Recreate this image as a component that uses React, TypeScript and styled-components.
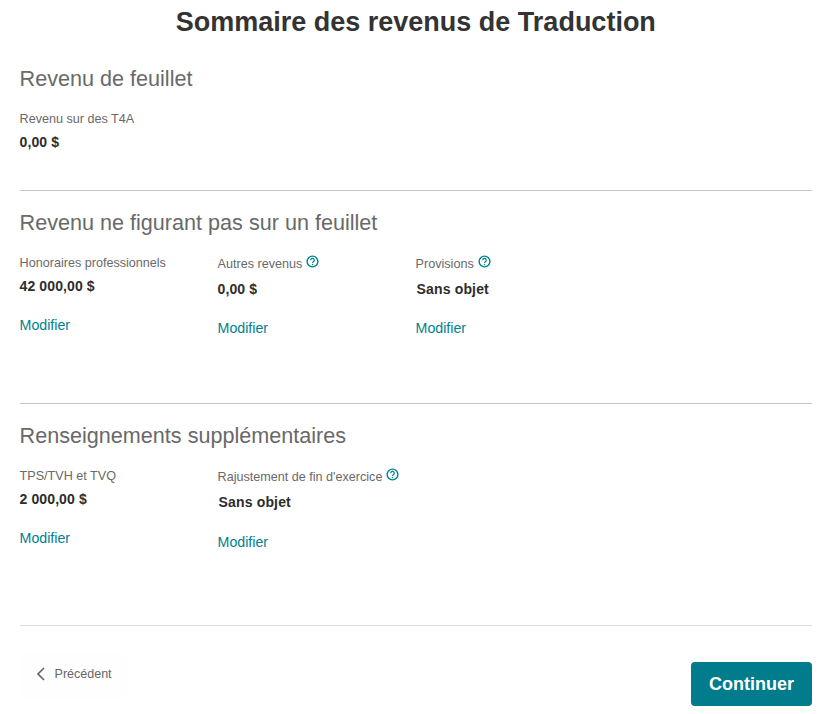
import React from 'react';
import styled, { createGlobalStyle } from 'styled-components';

const GlobalStyle = createGlobalStyle`
  html, body {
    margin: 0;
    padding: 0;
    background: #ffffff;
    font-family: "Liberation Sans", Arial, sans-serif;
  }
`;

const Page = styled.div`
  width: 825px;
  height: 714px;
  box-sizing: border-box;
  padding: 0 13px 0 19.6px;
  overflow: hidden;
`;

const Title = styled.h1`
  margin: 0;
  padding-top: 6px;
  height: 47px;
  box-sizing: border-box;
  text-align: center;
  font-size: 27px;
  line-height: 32px;
  font-weight: 700;
  color: #333333;
`;

const Section = styled.section<{ $height: number; $tone?: string }>`
  height: ${(p) => p.$height}px;
  box-sizing: border-box;
  border-bottom: 1px solid ${(p) => p.$tone ?? '#c4c6c8'};
`;

const SectionTitle = styled.h2`
  margin: 0;
  padding-top: 19px;
  font-size: 21.6px;
  line-height: 26px;
  font-weight: 400;
  color: #696969;
`;

const Fields = styled.div<{ $top: number }>`
  display: grid;
  grid-template-columns: repeat(3, 198px);
  padding-top: ${(p) => p.$top}px;
`;

const Field = styled.div``;

const LabelRow = styled.div<{ $help?: boolean }>`
  display: flex;
  align-items: flex-start;
  gap: 4px;
  height: 18px;
  padding-top: ${(p) => (p.$help ? 1 : 0)}px;
`;

const Label = styled.span`
  font-size: 12.6px;
  line-height: 16px;
  color: #696969;
`;

const HelpIcon = styled.svg`
  width: 13px;
  height: 13px;
  margin-top: -1px;
  flex: none;
`;

const Amount = styled.div<{ $help?: boolean; $spaced?: boolean }>`
  margin-top: ${(p) => (p.$help ? 7 : 5)}px;
  padding-left: ${(p) => (p.$spaced ? 1 : 0)}px;
  font-size: 14px;
  line-height: 17px;
  font-weight: 700;
  letter-spacing: ${(p) => (p.$spaced ? 0.15 : 0.1)}px;
  color: #2d2d2d;
`;

const EditLink = styled.a<{ $gap?: number }>`
  display: block;
  margin-top: ${(p) => p.$gap ?? 22}px;
  font-size: 14.2px;
  line-height: 17px;
  color: #00818f;
  text-decoration: none;
`;

const Footer = styled.div`
  display: flex;
  justify-content: space-between;
  align-items: flex-start;
  padding-top: 28px;
`;

const BackButton = styled.button`
  display: flex;
  align-items: center;
  gap: 9px;
  width: 108px;
  height: 44px;
  padding: 0 0 4px 16px;
  border: 0;
  border-radius: 4px;
  background: #fefefe;
  font-family: inherit;
  font-size: 12.5px;
  color: #666666;
`;

const NextButton = styled.button`
  width: 121px;
  height: 44px;
  margin-top: 8px;
  border: 0;
  border-radius: 4px;
  background: #007c8c;
  font-family: inherit;
  font-size: 18px;
  font-weight: 700;
  color: #ffffff;
`;

const Help = () => (
  <HelpIcon viewBox="0 0 13 13" fill="none">
    <circle cx="6.5" cy="6.5" r="5.4" stroke="#00818f" strokeWidth="1.4" />
    <path d="M4.7 5.2a1.8 1.8 0 1 1 2.7 1.5c-.6.35-.9.6-.9 1.2" stroke="#00818f" strokeWidth="1.2" />
    <circle cx="6.5" cy="9.6" r=".75" fill="#00818f" />
  </HelpIcon>
);

interface Item {
  label: string;
  value: string;
  help?: boolean;
  link?: boolean;
  linkGap?: number;
}

const InfoField = ({ label, value, help, link = true, linkGap }: Item) => (
  <Field>
    <LabelRow $help={help}>
      <Label>{label}</Label>
      {help && <Help />}
    </LabelRow>
    <Amount $help={help} $spaced={value === 'Sans objet'}>{value}</Amount>
    {link && <EditLink href="#" $gap={linkGap}>Modifier</EditLink>}
  </Field>
);

export default function App() {
  return (
    <Page>
      <GlobalStyle />
      <Title>Sommaire des revenus de Traduction</Title>
      <Section $height={144}>
        <SectionTitle>Revenu de feuillet</SectionTitle>
        <Fields $top={19}>
          <InfoField label="Revenu sur des T4A" value="0,00 $" link={false} />
        </Fields>
      </Section>
      <Section $height={213}>
        <SectionTitle>Revenu ne figurant pas sur un feuillet</SectionTitle>
        <Fields $top={19}>
          <InfoField label="Honoraires professionnels" value="42 000,00 $" />
          <InfoField label="Autres revenus" value="0,00 $" help />
          <InfoField label="Provisions" value="Sans objet" help />
        </Fields>
      </Section>
      <Section $height={222} $tone="#dddddd">
        <SectionTitle>Renseignements supplémentaires</SectionTitle>
        <Fields $top={19}>
          <InfoField label="TPS/TVH et TVQ" value="2 000,00 $" />
          <InfoField label="Rajustement de fin d'exercice" value="Sans objet" help linkGap={23} />
        </Fields>
      </Section>
      <Footer>
        <BackButton>
          <svg width="10" height="14" viewBox="0 0 10 14" fill="none">
            <path d="M8 1 2 7l6 6" stroke="#666666" strokeWidth="1.7" />
          </svg>
          Précédent
        </BackButton>
        <NextButton>Continuer</NextButton>
      </Footer>
    </Page>
  );
}
